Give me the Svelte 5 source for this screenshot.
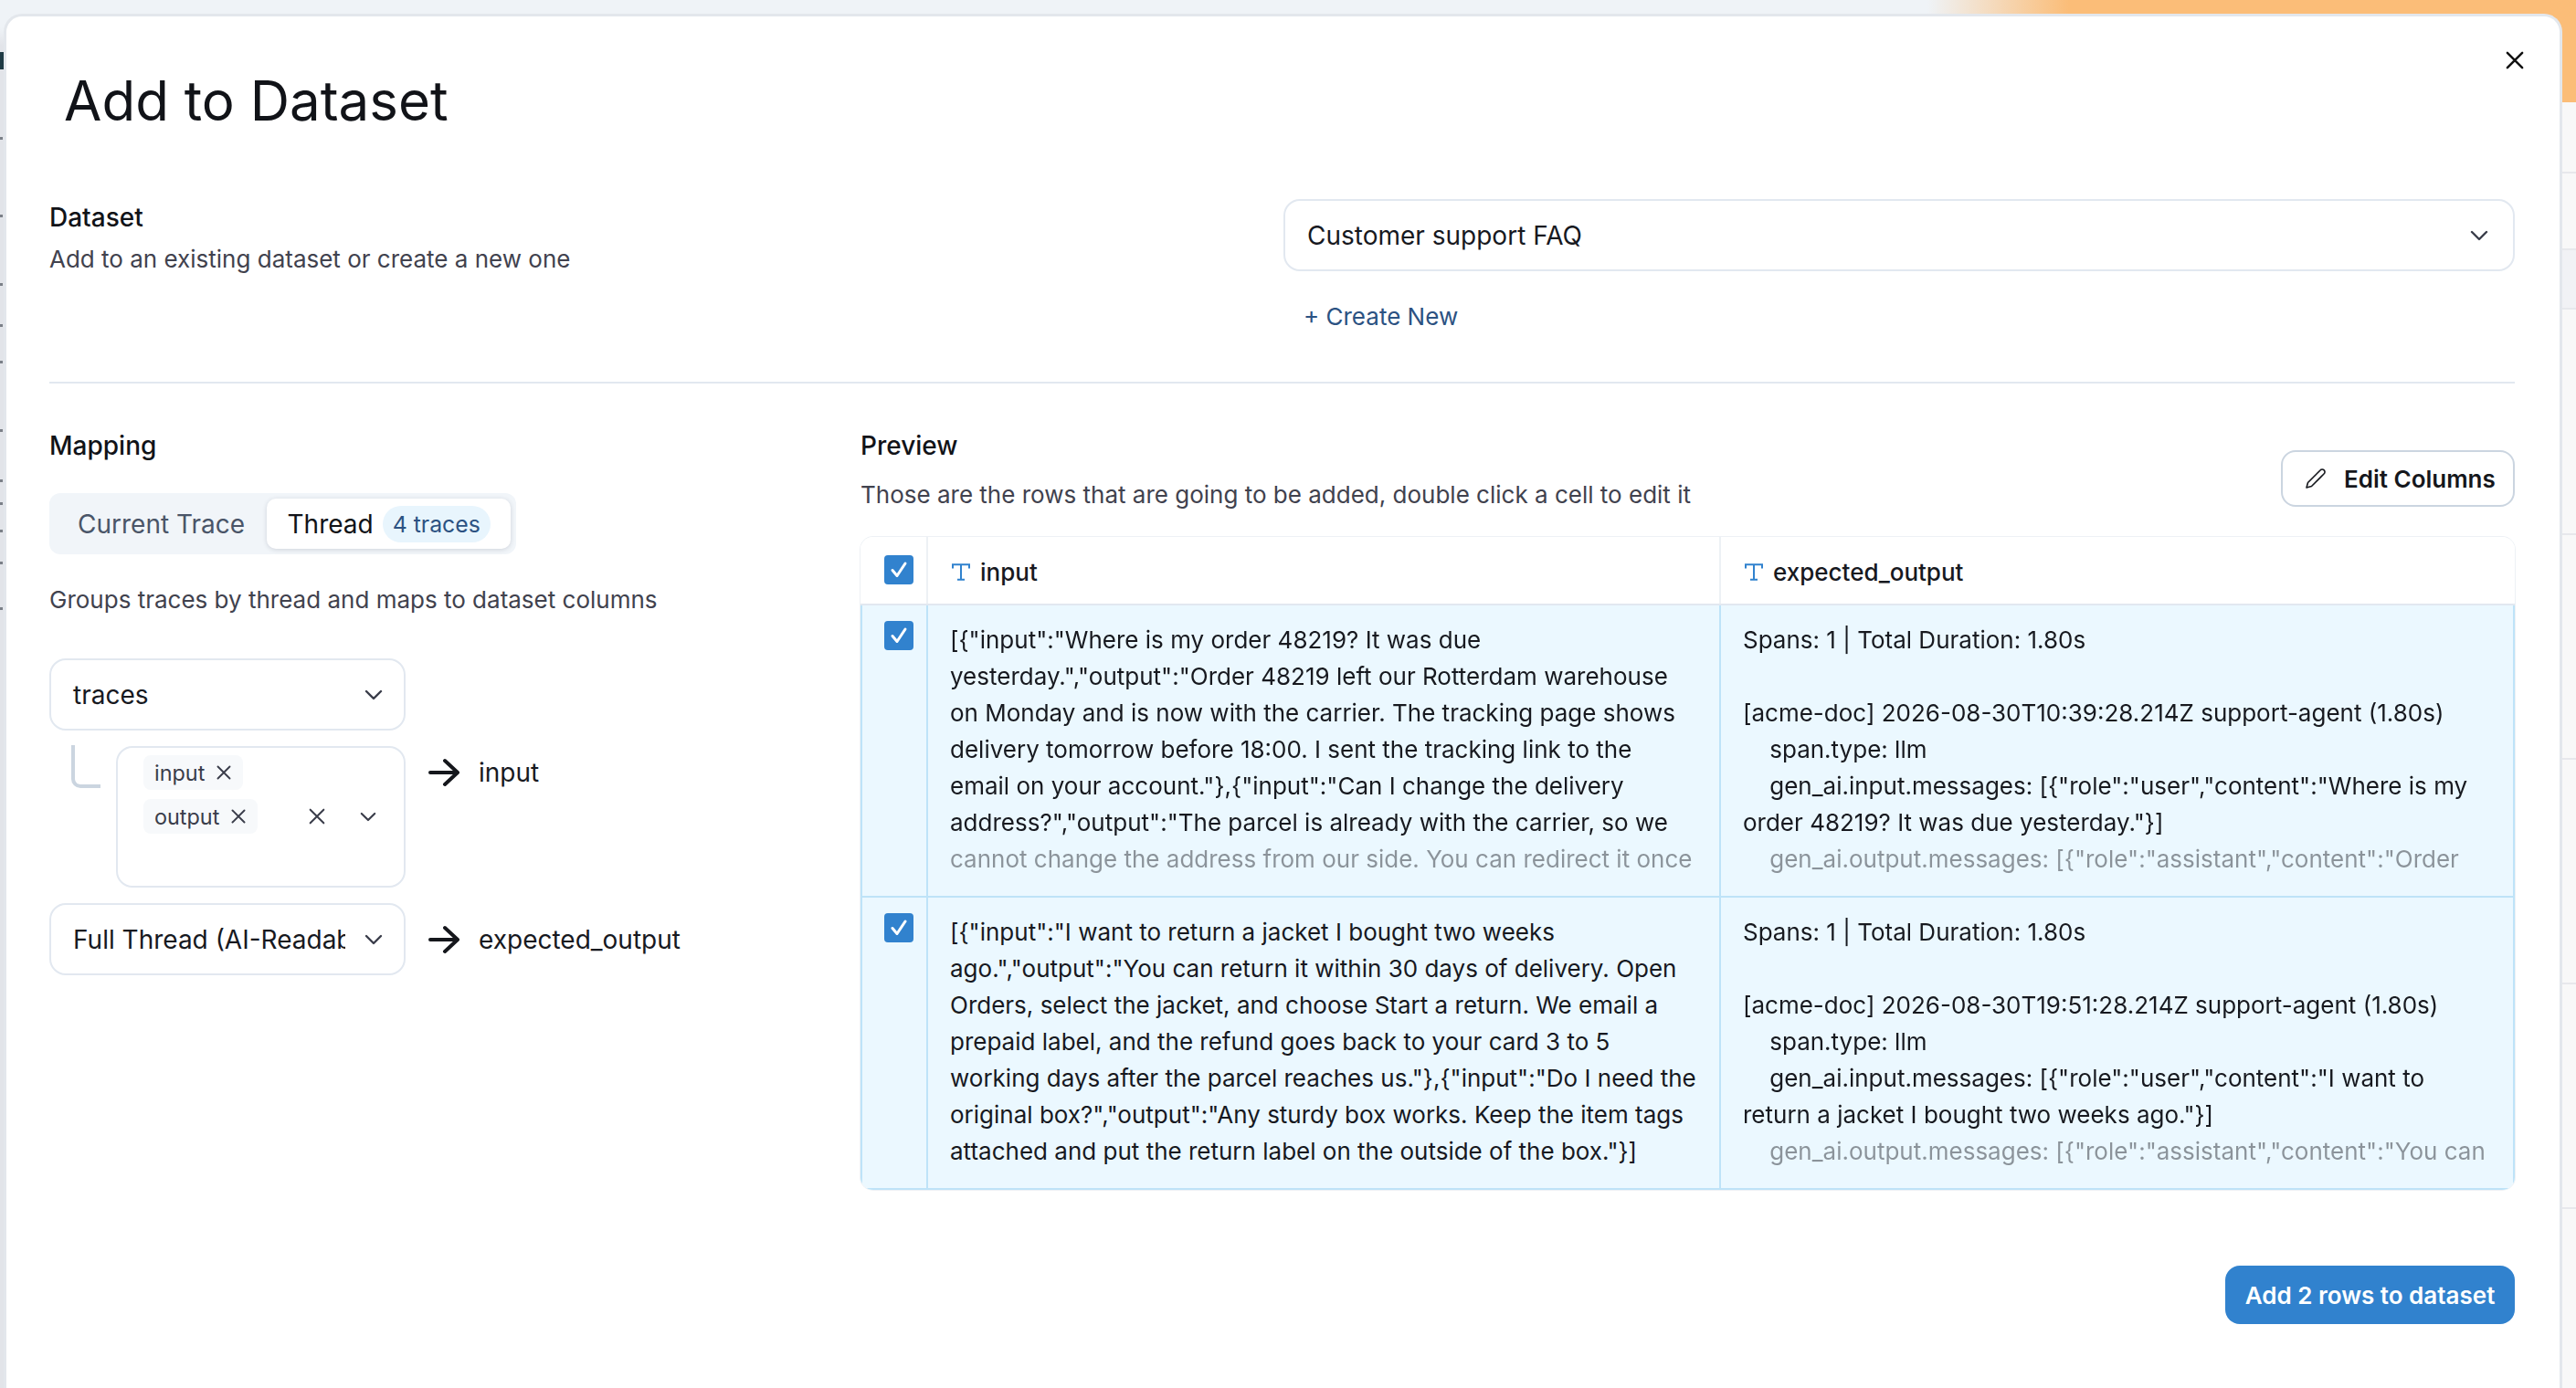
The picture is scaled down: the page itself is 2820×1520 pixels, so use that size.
<script>
  const rows = [
    {
      input: `[{"input":"Where is my order 48219? It was due yesterday.","output":"Order 48219 left our Rotterdam warehouse on Monday and is now with the carrier. The tracking page shows delivery tomorrow before 18:00. I sent the tracking link to the email on your account."},{"input":"Can I change the delivery address?","output":"The parcel is already with the carrier, so we cannot change the address from our side. You can redirect it once`,
      inputFade: true,
      output: `Spans: 1 | Total Duration: 1.80s

[acme-doc] 2026-08-30T10:39:28.214Z support-agent (1.80s)
    span.type: llm
    gen_ai.input.messages: [{"role":"user","content":"Where is my order 48219? It was due yesterday."}]
    gen_ai.output.messages: [{"role":"assistant","content":"Order`
    },
    {
      input: `[{"input":"I want to return a jacket I bought two weeks ago.","output":"You can return it within 30 days of delivery. Open Orders, select the jacket, and choose Start a return. We email a prepaid label, and the refund goes back to your card 3 to 5 working days after the parcel reaches us."},{"input":"Do I need the original box?","output":"Any sturdy box works. Keep the item tags attached and put the return label on the outside of the box."}]`,
      inputFade: false,
      output: `Spans: 1 | Total Duration: 1.80s

[acme-doc] 2026-08-30T19:51:28.214Z support-agent (1.80s)
    span.type: llm
    gen_ai.input.messages: [{"role":"user","content":"I want to return a jacket I bought two weeks ago."}]
    gen_ai.output.messages: [{"role":"assistant","content":"You can`
    }
  ];

  const sideMarks = [57, 150, 235, 310, 355, 395, 470, 525, 550, 580, 615, 665];
</script>

{#snippet chevron(w)}
  <svg class="chev" width={w} height={w / 2 + 2} viewBox="0 0 20 12" aria-hidden="true">
    <path d="M2 2l8 8 8-8" />
  </svg>
{/snippet}

{#snippet cross(s)}
  <svg class="cross" width={s} height={s} viewBox="0 0 16 16" aria-hidden="true">
    <path d="M1.5 1.5l13 13M14.5 1.5l-13 13" />
  </svg>
{/snippet}

{#snippet arrow()}
  <svg class="arrow" width="34" height="32" viewBox="0 0 34 32" aria-hidden="true">
    <path d="M2 16h30M18 3l14 13-14 13" />
  </svg>
{/snippet}

{#snippet check()}
  <span class="check">
    <svg width="22" height="20" viewBox="0 0 22 20" aria-hidden="true"><path d="M4 10.5l5 6L18 3" /></svg>
  </span>
{/snippet}

{#snippet typeIcon()}
  <svg class="type" width="20" height="19" viewBox="0 0 20 19" aria-hidden="true">
    <path d="M1 5.5V1.2h18v4.3M10 1.2v16.6M6 17.8h8" />
  </svg>
{/snippet}

<div class="page">
  <div class="side">
    {#each sideMarks as y, i}
      <span class="mark" class:dark={i === 0} style="top: {y}px"></span>
    {/each}
  </div>
  <div class="behind">
    <div class="banner"></div>
    <div class="row" style="height: 76px"></div>
    <div class="row" style="height: 82px"></div>
    <div class="row tint" style="height: 63px"></div>
    <div class="row" style="height: 245px"></div>
    <div class="row" style="height: 244px"></div>
    <div class="row" style="height: 244px"></div>
    <div class="row" style="height: 244px"></div>
    <div class="row"></div>
  </div>

  <div class="modal">
    <button class="close" aria-label="Close">{@render cross(20)}</button>
    <h2>Add to Dataset</h2>

    <section class="dataset">
      <div>
        <div class="label">Dataset</div>
        <div class="desc spaced">Add to an existing dataset or create a new one</div>
      </div>
      <div>
        <div class="select wide">
          <span>Customer support FAQ</span>
          {@render chevron(20)}
        </div>
        <div class="create">+ Create New</div>
      </div>
    </section>

    <hr />

    <section class="columns">
      <div class="mapping">
        <div class="label">Mapping</div>

        <div class="tabs">
          <div class="tab">Current Trace</div>
          <div class="tab active">Thread <span class="badge">4 traces</span></div>
        </div>

        <div class="desc groups">Groups traces by thread and maps to dataset columns</div>

        <div class="select small first">
          <span>traces</span>
          {@render chevron(20)}
        </div>

        <div class="map-row nested">
          <div class="elbow"></div>
          <div class="multi">
            <div class="tags">
              <span class="tag">input {@render cross(16)}</span>
              <span class="tag">output {@render cross(16)}</span>
            </div>
            <div class="multi-icons">
              <span class="clear">{@render cross(18)}</span>
              {@render chevron(18)}
            </div>
          </div>
          <div class="target">{@render arrow()}<span>input</span></div>
        </div>

        <div class="map-row centered">
          <div class="select small">
            <span class="clip">Full Thread (AI-Readable)</span>
            {@render chevron(20)}
          </div>
          <div class="target">{@render arrow()}<span>expected_output</span></div>
        </div>
      </div>

      <div class="preview">
        <div class="preview-head">
          <div>
            <div class="label">Preview</div>
            <div class="desc sub">Those are the rows that are going to be added, double click a cell to edit it</div>
          </div>
          <button class="edit">
            <svg width="24" height="24" viewBox="0 0 24 24" aria-hidden="true">
              <path d="M17 3a2.85 2.83 0 1 1 4 4L7.5 20.5 2 22l1.5-5.5Z" />
            </svg>
            Edit Columns
          </button>
        </div>

        <div class="table">
          <div class="tr head">
            <div class="td box">{@render check()}</div>
            <div class="td name">{@render typeIcon()}input</div>
            <div class="td name">{@render typeIcon()}expected_output</div>
          </div>
          {#each rows as row}
            <div class="tr">
              <div class="td box">{@render check()}</div>
              <div class="td"><div class="cell" class:fade={row.inputFade}>{row.input}</div></div>
              <div class="td"><div class="cell fade">{row.output}</div></div>
            </div>
          {/each}
        </div>

        <div class="footer">
          <button class="primary">Add 2 rows to dataset</button>
        </div>
      </div>
    </section>
  </div>
</div>

<style>
  :global(body) {
    margin: 0;
    font-family: Inter, "Liberation Sans", sans-serif;
    color: #17191f;
  }

  .page {
    position: relative;
    display: flex;
    width: 2820px;
    height: 1520px;
    overflow: hidden;
    background: #eff3f7;
  }

  .side {
    position: relative;
    flex: none;
    width: 5px;
    background: linear-gradient(to bottom, #eff3f7 30px, #e2e4e9 50px);
  }

  .mark {
    position: absolute;
    left: 0;
    width: 3px;
    height: 3px;
    background: #7b8088;
  }

  .mark.dark {
    width: 4px;
    height: 19px;
    background: #1f3b45;
  }

  .behind {
    flex: 1;
    display: flex;
    flex-direction: column;
  }

  .banner {
    flex: none;
    height: 112px;
    background: linear-gradient(to right, #eff3f7 2105px, #fbbd78 2260px);
  }

  .row {
    flex: none;
    border-bottom: 2px solid #e7e8ec;
    background: #f8f8f8;
  }

  .row:last-child {
    flex: 1;
    border: 0;
  }

  .row.tint {
    background: #f1f2f5;
  }

  .modal {
    position: absolute;
    left: 4px;
    right: 15px;
    top: 15px;
    bottom: -40px;
    box-sizing: border-box;
    padding: 0 49px 0 47px;
    background: #fff;
    border: 3px solid #e3e7ec;
    border-bottom: 0;
    border-radius: 20px 20px 0 0;
  }

  .close {
    position: absolute;
    top: 38px;
    right: 39px;
    display: flex;
    padding: 0;
    border: 0;
    background: none;
  }

  .close :global(.cross path) {
    stroke: #111;
    stroke-width: 2;
  }

  h2 {
    margin: 54px 0 0 16px;
    font-size: 60px;
    line-height: 76px;
    font-weight: 400;
    color: #111318;
  }

  .dataset {
    display: grid;
    grid-template-columns: 1351px 1fr;
    margin-top: 70px;
  }

  .label {
    font-size: 28px;
    line-height: 40px;
    font-weight: 500;
    color: #111318;
  }

  .desc {
    font-size: 26px;
    line-height: 40px;
    color: #41424e;
  }

  .spaced {
    margin-top: 6px;
  }

  .sub {
    margin-top: 14px;
  }

  .select {
    display: flex;
    align-items: center;
    justify-content: space-between;
    box-sizing: border-box;
    height: 79px;
    padding: 0 24px;
    border: 2px solid #e2e8f0;
    border-radius: 18px;
    font-size: 28px;
    background: #fff;
  }

  .select.wide {
    padding-right: 27px;
  }

  .select.small {
    flex: none;
    width: 390px;
    padding: 0 23px 0 24px;
  }

  .select.first {
    margin-top: 44px;
  }

  .clip {
    width: 298px;
    overflow: hidden;
    white-space: nowrap;
  }

  .chev {
    flex: none;
    fill: none;
    stroke: #3a3d4a;
    stroke-width: 2.4;
    stroke-linecap: round;
    stroke-linejoin: round;
  }

  .cross {
    flex: none;
    fill: none;
    stroke: #3a3d4a;
    stroke-width: 1.9;
    stroke-linecap: round;
  }

  .arrow {
    flex: none;
    fill: none;
    stroke: #15171c;
    stroke-width: 4;
    stroke-linecap: round;
    stroke-linejoin: round;
  }

  .create {
    margin-top: 30px;
    padding-left: 22px;
    font-size: 26px;
    line-height: 40px;
    color: #2c5282;
  }

  hr {
    margin: 51px 0 0;
    height: 2px;
    border: 0;
    background: #e2e8f0;
  }

  .columns {
    display: grid;
    grid-template-columns: 888px 1fr;
    margin-top: 48px;
  }

  .tabs {
    display: inline-flex;
    align-items: center;
    box-sizing: border-box;
    width: 511px;
    height: 67px;
    margin-top: 32px;
    padding: 6px;
    border-radius: 12px;
    background: #f1f5f9;
    font-size: 28px;
  }

  .tab {
    display: flex;
    align-items: center;
    padding-left: 25px;
    width: 207px;
    color: #4a5568;
  }

  .tab.active {
    box-sizing: border-box;
    width: 268px;
    height: 55px;
    padding-left: 23px;
    border-radius: 10px;
    background: #fff;
    box-shadow: 0 1px 5px rgba(30, 40, 60, 0.16);
    color: #111318;
  }

  .badge {
    margin-left: 10px;
    padding: 0 11px;
    line-height: 40px;
    border-radius: 20px;
    background: #e8f5fd;
    color: #2c5282;
    font-size: 24.8px;
  }

  .groups {
    margin-top: 30px;
  }

  .map-row {
    display: flex;
    margin-top: 17px;
  }

  .map-row.nested {
    margin-top: 17px;
    position: relative;
  }

  .map-row.centered {
    align-items: center;
  }

  .elbow {
    flex: none;
    box-sizing: border-box;
    width: 32px;
    height: 47px;
    margin: -1px 17px 0 24px;
    border-left: 4px solid #cbd5e0;
    border-bottom: 4px solid #cbd5e0;
    border-bottom-left-radius: 10px;
  }

  .multi {
    flex: none;
    display: flex;
    box-sizing: border-box;
    width: 317px;
    height: 155px;
    padding: 8px 0 0 28px;
    border: 2px solid #e2e8f0;
    border-radius: 18px;
  }

  .tags {
    display: flex;
    flex-direction: column;
    align-items: flex-start;
    gap: 10px;
    flex: 1;
  }

  .tag {
    display: flex;
    align-items: center;
    gap: 13px;
    height: 38px;
    padding: 0 13px 0 12px;
    border-radius: 8px;
    background: #f7f9fb;
    font-size: 23.4px;
    color: #3a3d4a;
  }

  .multi-icons {
    display: flex;
    align-items: center;
    height: 38px;
    margin: 48px 30px 0 0;
  }

  .clear {
    display: flex;
    margin-right: 38px;
  }

  .clear :global(.cross) {
    stroke-width: 1.8;
  }

  .target {
    display: flex;
    align-items: center;
    gap: 21px;
    height: 60px;
    margin-left: 25px;
    font-size: 28px;
  }

  .nested .target {
    margin-top: -1px;
  }

  .preview-head {
    display: flex;
    align-items: flex-end;
    justify-content: space-between;
  }

  .edit {
    display: flex;
    align-items: center;
    gap: 19px;
    box-sizing: border-box;
    width: 256px;
    height: 62px;
    margin-bottom: 7px;
    padding: 0 0 0 24px;
    border: 2px solid #cbd5e0;
    border-radius: 16px;
    background: #fff;
    font: 600 26px Inter, sans-serif;
    color: #15171c;
  }

  .edit svg {
    flex: none;
    fill: none;
    stroke: #15171c;
    stroke-width: 1.6;
    stroke-linejoin: round;
  }

  .table {
    margin-top: 26px;
    border-radius: 14px;
    overflow: hidden;
    box-shadow: 0 0 0 1px #edf1f5;
  }

  .tr {
    display: grid;
    grid-template-columns: 74px 868px 1fr;
    box-sizing: border-box;
    height: 320px;
    background: #ebf8ff;
    border-bottom: 2px solid #bee3f8;
    box-shadow: inset 2px 0 #bee3f8, inset -2px 0 #bee3f8;
  }

  .tr.head {
    height: 75px;
    background: #fff;
    border-bottom-color: #e2e8f0;
    box-shadow: none;
  }

  .td {
    box-sizing: border-box;
    padding: 18px 25px 0 24px;
    border-right: 2px solid #bee3f8;
  }

  .td:last-child {
    border-right: 0;
  }

  .head .td {
    border-right-color: #edf1f5;
  }

  .td.box {
    padding: 17px 0 0 26px;
  }

  .td.name {
    display: flex;
    align-items: center;
    gap: 11px;
    padding: 3px 0 0 26px;
    font-size: 26px;
    font-weight: 500;
  }

  .type {
    flex: none;
    fill: none;
    stroke: #3182ce;
    stroke-width: 2;
  }

  .check {
    display: flex;
    align-items: center;
    justify-content: center;
    width: 32px;
    height: 32px;
    border-radius: 4px;
    background: #3182ce;
  }

  .head .check {
    margin-top: 3px;
  }

  .check svg {
    fill: none;
    stroke: #fff;
    stroke-width: 3;
    stroke-linecap: round;
    stroke-linejoin: round;
  }

  .cell {
    height: 280px;
    overflow: hidden;
    font-size: 26px;
    line-height: 40px;
    white-space: pre-wrap;
  }

  .cell.fade {
    mask-image: linear-gradient(to bottom, #000 238px, rgba(0, 0, 0, 0.45) 248px);
  }

  .footer {
    display: flex;
    justify-content: flex-end;
    margin: 83px 0 0 0;
  }

  .primary {
    width: 317px;
    height: 64px;
    padding: 0;
    border: 0;
    border-radius: 16px;
    background: #3182ce;
    color: #fff;
    font: 600 26px Inter, sans-serif;
  }
</style>
